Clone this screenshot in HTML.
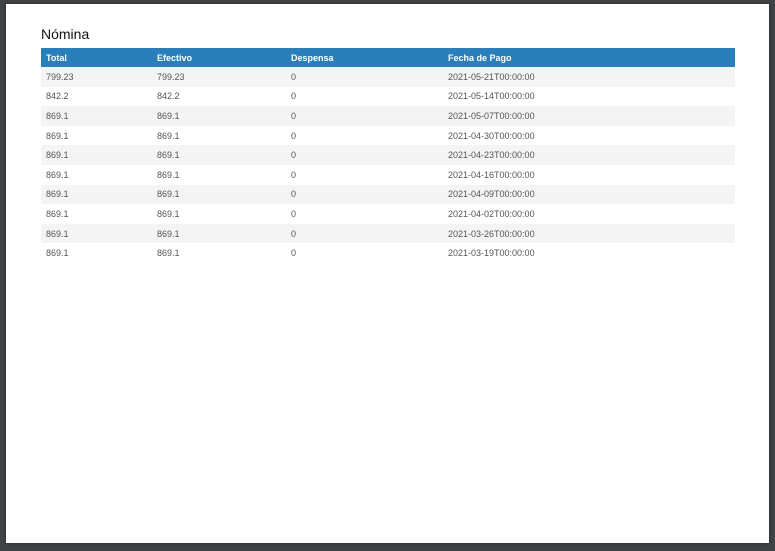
<!DOCTYPE html>
<html><head><style>
html,body{margin:0;padding:0;width:775px;height:551px;background:#404346;overflow:hidden}
.page{position:absolute;left:6px;top:4px;width:763px;height:539px;background:#fff;box-shadow:0 0 3px #222}
h1{position:absolute;left:35px;top:22px;margin:0;font:14px "Liberation Sans",sans-serif;color:#111}
table{position:absolute;left:35px;top:44px;width:694px;border-collapse:collapse;font:9px "Liberation Sans",sans-serif;color:#555}
th{background:#2a7fba;color:#fff;text-align:left;font-weight:bold;height:19px;padding:0 0 0 5px}
td{height:19.6px;padding:0 0 0 5px}
tbody tr:nth-child(odd){background:#f4f4f4}
</style></head><body><div class="page">
<h1>Nómina</h1>
<table>
<colgroup><col style="width:111px"><col style="width:134px"><col style="width:157px"><col></colgroup>
<thead><tr><th>Total</th><th>Efectivo</th><th>Despensa</th><th>Fecha de Pago</th></tr></thead>
<tbody>
<tr><td>799.23</td><td>799.23</td><td>0</td><td>2021-05-21T00:00:00</td></tr>
<tr><td>842.2</td><td>842.2</td><td>0</td><td>2021-05-14T00:00:00</td></tr>
<tr><td>869.1</td><td>869.1</td><td>0</td><td>2021-05-07T00:00:00</td></tr>
<tr><td>869.1</td><td>869.1</td><td>0</td><td>2021-04-30T00:00:00</td></tr>
<tr><td>869.1</td><td>869.1</td><td>0</td><td>2021-04-23T00:00:00</td></tr>
<tr><td>869.1</td><td>869.1</td><td>0</td><td>2021-04-16T00:00:00</td></tr>
<tr><td>869.1</td><td>869.1</td><td>0</td><td>2021-04-09T00:00:00</td></tr>
<tr><td>869.1</td><td>869.1</td><td>0</td><td>2021-04-02T00:00:00</td></tr>
<tr><td>869.1</td><td>869.1</td><td>0</td><td>2021-03-26T00:00:00</td></tr>
<tr><td>869.1</td><td>869.1</td><td>0</td><td>2021-03-19T00:00:00</td></tr>
</tbody></table>
</div></body></html>
